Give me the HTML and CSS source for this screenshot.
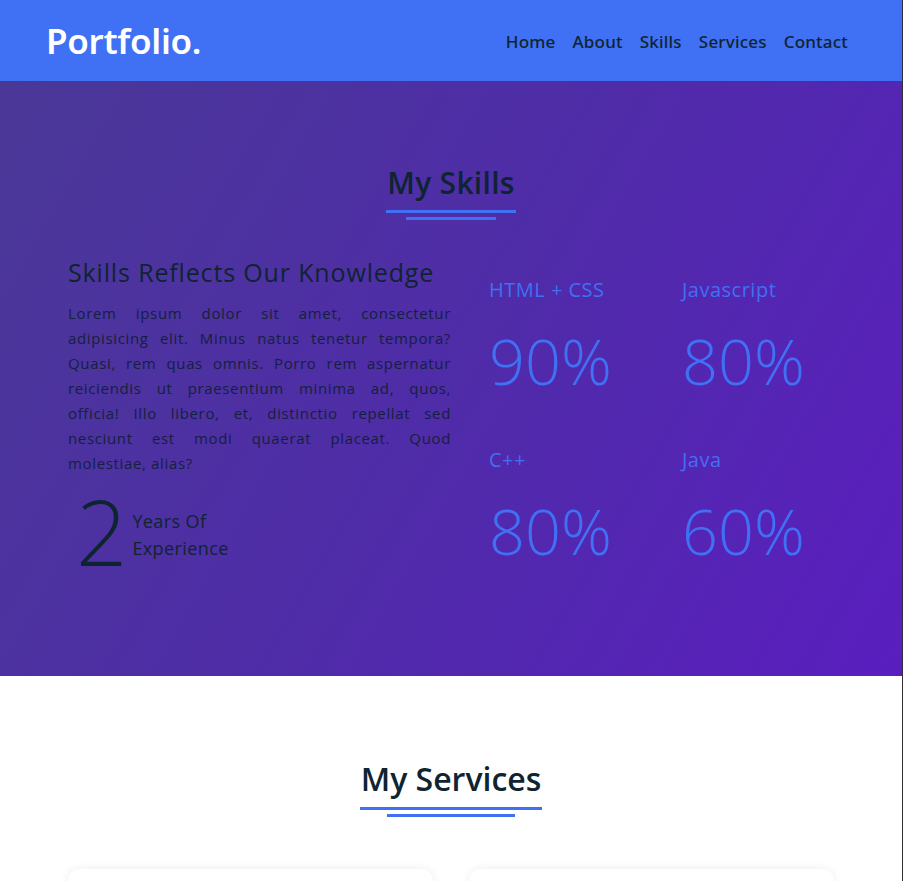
FILE: index.html
```html
<!DOCTYPE html>
<html lang="en">
<head>
<meta charset="utf-8">
<title>Portfolio</title>
<link rel="stylesheet" href="styles.css">
</head>
<body>
<header class="header">
  <a class="logo" href="#">Portfolio.</a>
  <nav class="nav">
    <a href="#">Home</a>
    <a href="#">About</a>
    <a href="#">Skills</a>
    <a href="#">Services</a>
    <a href="#">Contact</a>
  </nav>
</header>

<section class="skills">
  <div class="title-wrap"><div class="title-block"><h2 class="title">My Skills</h2></div></div>
  <div class="skills-row">
    <div class="about">
      <h3 class="about-heading">Skills Reflects Our Knowledge</h3>
      <p class="about-text">Lorem ipsum dolor sit amet, consectetur adipisicing elit. Minus natus tenetur tempora? Quasi, rem quas omnis. Porro rem aspernatur reiciendis ut praesentium minima ad, quos, officia! Illo libero, et, distinctio repellat sed nesciunt est modi quaerat placeat. Quod molestiae, alias?</p>
      <div class="experience">
        <span class="exp-num">2</span>
        <span class="exp-label">Years Of<br>Experience</span>
      </div>
    </div>
    <div class="stats">
      <div class="stat"><span class="stat-name">HTML + CSS</span><span class="stat-value">90%</span></div>
      <div class="stat"><span class="stat-name">Javascript</span><span class="stat-value">80%</span></div>
      <div class="stat"><span class="stat-name">C++</span><span class="stat-value">80%</span></div>
      <div class="stat"><span class="stat-name">Java</span><span class="stat-value">60%</span></div>
    </div>
  </div>
</section>

<section class="services">
  <div class="title-wrap"><div class="title-block"><h2 class="title title-lg">My Services</h2></div></div>
  <div class="cards">
    <div class="card"></div>
    <div class="card"></div>
  </div>
</section>
</body>
</html>
```

FILE: styles.css
```css
* { box-sizing: border-box; margin: 0; padding: 0; }

html { background: #2e2e33; }

body {
  margin: 0;
  width: 902px;
  background: #ffffff;
  font-family: "Open Sans", "Noto Sans", sans-serif;
  color: #0e2431;
  overflow: hidden;
}

a { text-decoration: none; color: inherit; }

/* ---------- header ---------- */
.header {
  height: 81px;
  background: #4070f4;
  display: flex;
  align-items: center;
  justify-content: space-between;
  padding: 0 54px 0 46px;
}

.logo {
  color: #ffffff;
  font-family: "Noto Sans", sans-serif;
  font-size: 35px;
  font-weight: 600;
  letter-spacing: -0.3px;
  line-height: 40px;
}

.nav {
  display: flex;
  gap: 17px;
  font-family: "Noto Sans", sans-serif;
  font-size: 17px;
  font-weight: 500;
  letter-spacing: 0.2px;
  color: #0e2431;
  margin-top: 2px;
}

/* ---------- section titles ---------- */
.title-wrap { text-align: center; }

.title-block { display: inline-block; }

.title-block::after {
  content: "";
  display: block;
  width: 70%;
  height: 3px;
  margin: 4px auto 0;
  background: #4070f4;
}

.title {
  font-size: 30px;
  font-weight: 600;
  line-height: 44px;
  letter-spacing: 0.3px;
  color: #0e2431;
  padding: 0 1px 5px;
  border-bottom: 3px solid #4070f4;
}

.title-lg {
  font-size: 32px;
  letter-spacing: 0;
  padding-bottom: 6px;
}

/* ---------- skills ---------- */
.skills {
  height: 595px;
  background: linear-gradient(120deg, #4a3897 0%, #4f2ca8 50%, #5a1ebf 100%);
  padding-top: 80px;
}

.skills-row {
  display: flex;
  align-items: flex-start;
  padding: 0 68px;
  margin-top: 34px;
}

.about { width: 383px; flex: none; }

.about-heading {
  font-size: 25px;
  font-weight: 500;
  line-height: 36px;
  letter-spacing: 0.85px;
  color: #0e2431;
}

.about-text {
  margin-top: 11px;
  font-size: 15px;
  line-height: 25px;
  letter-spacing: 0.65px;
  text-align: justify;
  color: #14203f;
}

.experience {
  display: flex;
  align-items: flex-start;
  margin-top: 10px;
  padding-left: 8px;
}

.exp-num {
  font-size: 90px;
  font-weight: 300;
  line-height: 90px;
  color: #0e2431;
}

.exp-label {
  margin-left: 5px;
  margin-top: 22px;
  font-size: 18px;
  line-height: 27px;
  font-weight: 500;
  letter-spacing: 0.4px;
  color: #0e2431;
}

.stats {
  display: grid;
  grid-template-columns: 193px 1fr;
  align-content: start;
  row-gap: 48px;
  margin-left: 38px;
  padding-top: 22px;
}

.stat { display: flex; flex-direction: column; }

.stat-name {
  font-size: 20px;
  line-height: 28px;
  letter-spacing: 0.5px;
  color: #4070f4;
}

.stat-value {
  margin-top: 20px;
  font-size: 63px;
  font-weight: 300;
  line-height: 74px;
  color: #4070f4;
}

/* ---------- services ---------- */
.services {
  padding-top: 81px;
  padding-bottom: 60px;
}

.cards {
  display: grid;
  grid-template-columns: 1fr 1fr;
  gap: 36px;
  padding: 52px 68px 0;
}

.card {
  height: 300px;
  background: #ffffff;
  border-radius: 12px;
  box-shadow: 0 0 10px rgba(0, 0, 0, 0.08);
}
```
